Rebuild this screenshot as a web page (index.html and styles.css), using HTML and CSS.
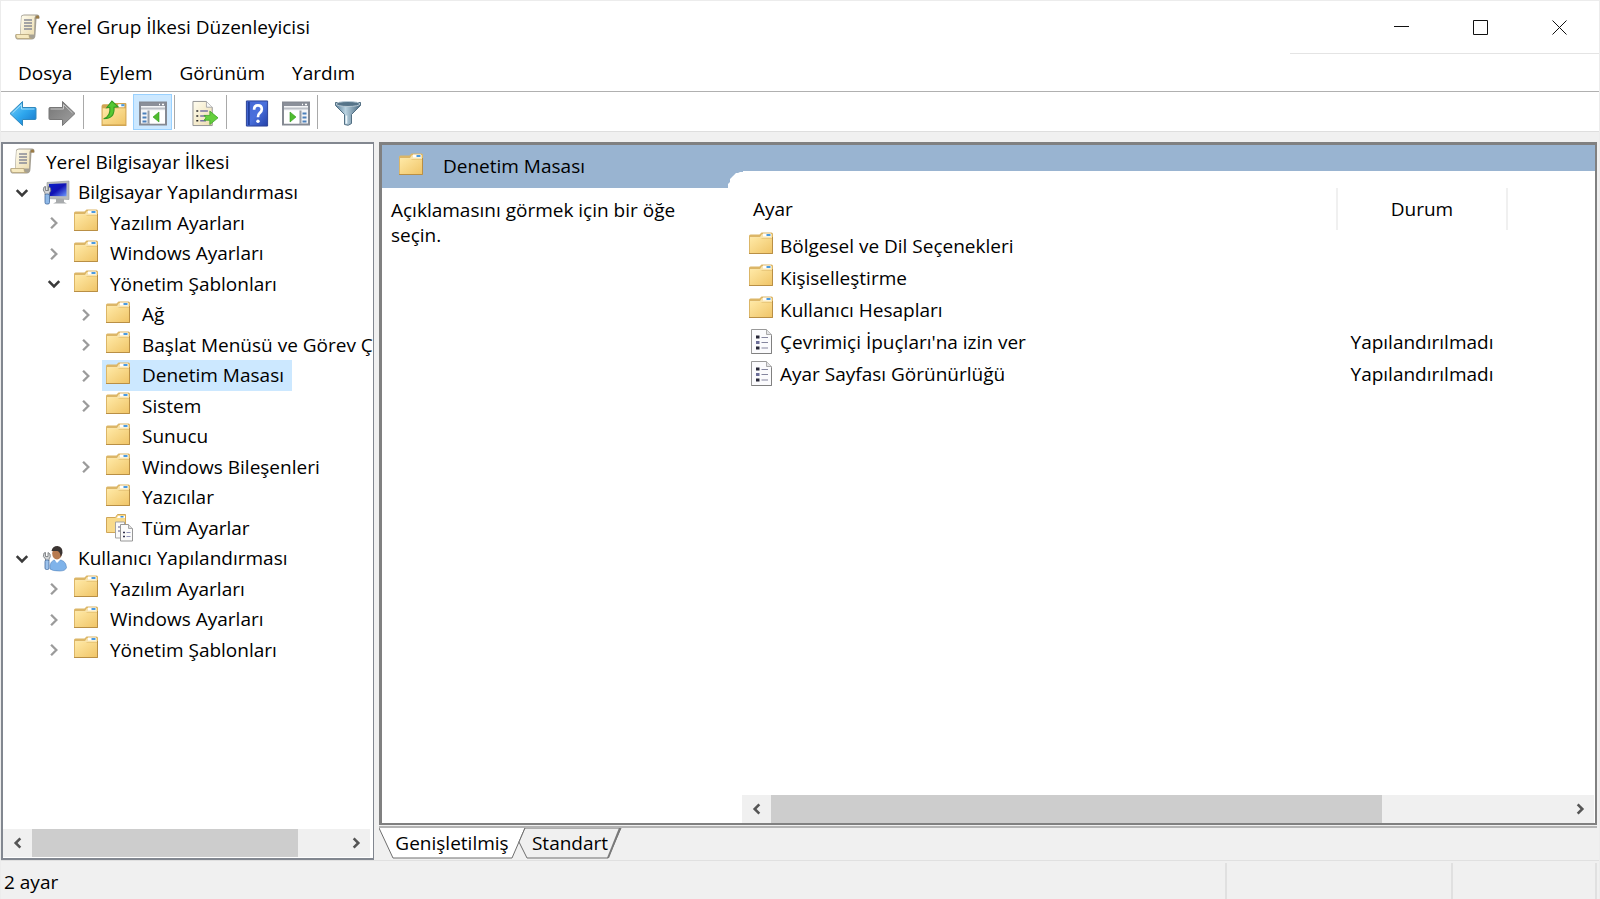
FILE: index.html
```html
<!DOCTYPE html>
<html lang="tr">
<head>
<meta charset="utf-8">
<title>Yerel Grup İlkesi Düzenleyicisi</title>
<link rel="stylesheet" href="styles.css">
</head>
<body>
<svg class="sprite" aria-hidden="true">
  <defs>
    <linearGradient id="g-folder" x1="0" y1="0" x2="1" y2="1"><stop offset="0" stop-color="#ffe9a6"/><stop offset="1" stop-color="#f0c568"/></linearGradient>
    <linearGradient id="g-blue" x1="0" y1="0" x2="1" y2="1"><stop offset="0" stop-color="#7fd0f8"/><stop offset=".5" stop-color="#2fa8ee"/><stop offset="1" stop-color="#1573c8"/></linearGradient>
    <linearGradient id="g-gray" x1="0" y1="0" x2="1" y2="1"><stop offset="0" stop-color="#757575"/><stop offset="1" stop-color="#a0a0a0"/></linearGradient>
    <linearGradient id="g-help" x1="0" y1="0" x2="1" y2="1"><stop offset="0" stop-color="#4668d4"/><stop offset=".5" stop-color="#4a70dc"/><stop offset="1" stop-color="#2340a8"/></linearGradient>
    <linearGradient id="g-screen" x1="0" y1="0" x2="1" y2="1"><stop offset="0" stop-color="#0a1fc8"/><stop offset=".5" stop-color="#1212b4"/><stop offset="1" stop-color="#6f9bff"/></linearGradient>
    <linearGradient id="g-paper" x1="0" y1="0" x2="1" y2="1"><stop offset="0" stop-color="#fffdf0"/><stop offset="1" stop-color="#ecdcae"/></linearGradient>
    <linearGradient id="g-funnel" x1="0" y1="0" x2="1" y2="0"><stop offset="0" stop-color="#5a7f99"/><stop offset=".4" stop-color="#b9d2e0"/><stop offset="1" stop-color="#48687f"/></linearGradient>
  </defs>
  <symbol id="folder" viewBox="0 0 28 24">
    <path d="M0 4q0-1.500 1.500-1.500h9l2-2H22.500q1.500 0 1.500 1.500v20H0z" fill="#dcb667"/>
    <path d="M1 5h10l2-3h10v4H1z" fill="#f8e4ae"/>
    <rect x="14" y="1.500" width="8" height="3" fill="#fff"/><rect x="17.500" y="2" width="4" height="2" fill="#4a9ae0"/>
    <path d="M1 5.500h10l2 1h10V21H1z" fill="url(#g-folder)"/>
    <path d="M0 21.500h23.500V5" fill="none" stroke="#b98f45"/>
  </symbol>
  <symbol id="scroll" viewBox="0 0 28 28">
    <path d="M6 2q1-1.500 3-1.500h13q3 0 2.500 4h-3l-1 16q0 5-4 5H2q-2.500-1-1.500-5H5z" fill="#a5a093"/>
    <path d="M6.500 3q0-1.500 2-1.500h12q-1.500 2-1 5l-.5 14H5.500z" fill="url(#g-paper)"/>
    <path d="M20.500 4q0-2.500 2-2.500t1.500 3h-3.500z" fill="#9b7b45"/>
    <path d="M1 20.500h13q-.5 4 2.500 4H3q-2.500 0-2-4z" fill="#f6e9bf" stroke="#b7a67b" stroke-width=".8"/>
    <path d="M9 6h8M9 9h8M9 12h8M9 15h8" stroke="#888a96" stroke-width="1.400"/>
  </symbol>
  <symbol id="computer" viewBox="0 0 28 28">
    <path d="M5 3.500 27 2v18.500l-22-1z" fill="#b9bcbd" stroke="#96999b" stroke-width=".6"/>
    <path d="M7 5l17.500-.7v13L7 17z" fill="url(#g-screen)"/>
    <path d="M14 20h8v3l3 1.500H11l3-1.500z" fill="#a8abad"/>
    <path d="M2 8l1.500-.5v4h3v-4L8.500 9q1 3-1 5v2H3v-2q-3-3-1-6z" fill="#d4d6d8" stroke="#6d7175" stroke-width=".8"/>
    <rect x="3" y="15" width="4.500" height="10" rx="1.500" fill="#8fb9e8" stroke="#41689c" stroke-width=".8"/>
  </symbol>
  <symbol id="user" viewBox="0 0 28 28">
    <path d="M8 24q-1-9 7-9.500 9 0 9.500 8-1 3.500-7 3.500-7 0-9.500-2z" fill="#7fb3ea" stroke="#5485bd" stroke-width=".6"/>
    <path d="M12 14l3 4 4-4z" fill="#fff"/>
    <ellipse cx="15" cy="8.500" rx="4.800" ry="6" fill="#b87b50"/>
    <path d="M9.500 6q1-5 6-5 5.500 1 5 7-1 3-2 4 0-5-3-6z" fill="#3b3432"/>
    <path d="M2 8l1.500-.5v4h2.500v-4L8 9q1 3-1 5v2H3.500v-2Q0 12 2 8z" fill="#d4d6d8" stroke="#6d7175" stroke-width=".8"/>
    <rect x="3" y="15" width="4" height="9.500" rx="1.500" fill="#9cc2ec" stroke="#41689c" stroke-width=".8"/>
  </symbol>
  <symbol id="all-settings" viewBox="0 0 28 28">
    <path d="M.5 3.500h9l2-3h8v18H.5z" fill="#f8da8b" stroke="#d0a658"/>
    <path d="M12 2h7v2h-8z" fill="#fff"/><path d="M14.500 2h3v1.500h-3z" fill="#3e91dc"/>
    <path d="M9.500 8h9v16h-9z" fill="#fafafa" stroke="#a3a3a3"/>
    <path d="M12 13h2m-2 4h2" stroke="#59598b"/>
    <path d="M14.500 10.500h8l4 4V27h-12z" fill="#fbfbfb" stroke="#979797"/><path d="M22.500 10.500v4h4" fill="#ddd" stroke="#a8a8a8"/>
    <path d="M17 18.500h2m-2 4h2" stroke="#32324e" stroke-width="1.500"/><path d="M20.500 18.500h4m-4 4h4" stroke="#9296bb"/>
  </symbol>
  <symbol id="setting" viewBox="0 0 28 28">
    <path d="M2.500 1.500h15l5 5v19h-20z" fill="#fbfbfd" stroke="#999"/><path d="M17.500 1.500v5h5" fill="#e3e3e6" stroke="#aaa"/>
    <path d="M22.500 8v17.500h-20" fill="none" stroke="#808080"/>
    <path d="M7 9h3.500m-3.500 11h3.500" stroke="#252536" stroke-width="3"/><path d="M7 14.500h3.500" stroke="#6c6e99" stroke-width="3"/>
    <path d="M12.500 9.500H19m-6.500 5H19m-6.500 5.500H19" stroke="#85869f" stroke-width="1.200"/>
  </symbol>
  <symbol id="back" viewBox="0 0 28 26"><path d="M1 13 13.500 1v6H26q1 0 1 1v10q0 1-1 1H13.500v6z" fill="url(#g-blue)" stroke="#3088bd"/><path d="M3.500 12.500 12.500 4v4.500h13" fill="none" stroke="#a4e0fb"/></symbol>
  <symbol id="forward" viewBox="0 0 28 26"><path d="M27 13 14.500 1v6H2Q1 7 1 8v10q0 1 1 1h12.500v6z" fill="url(#g-gray)" stroke="#777"/><path d="M2.500 8.500h13V4l9 8.500" fill="none" stroke="#c9c9c9"/></symbol>
  <symbol id="up" viewBox="0 0 26 26">
    <path d="M1 6q0-2 2-2h8l2-1h11q1 0 1 1v21H1z" fill="#d1a552"/><rect x="17" y="4" width="6" height="3" fill="#fff"/><rect x="20" y="4" width="3" height="2" fill="#4a9ae0"/>
    <path d="M2 8h22v15.500H2z" fill="url(#g-folder)"/>
    <path d="M3 18q7-2 6-11L6 7.500 11 1l6 5.500-4 .5q1 11-10 11z" fill="#55c832" stroke="#349821"/>
  </symbol>
  <symbol id="tree-view" viewBox="0 0 28 24">
    <path d="M1 1h26v22H1z" fill="#f4f5f7" stroke="#858a93" stroke-width="2"/><path d="M2 3h24" stroke="#8b909a" stroke-width="3"/><path d="M2 7h24" stroke="#bcc0c7" stroke-width="2"/><path d="M20 3h1m2 0h2" stroke="#fff" stroke-width="1.500"/>
    <path d="M9.500 9v13" stroke="#999ea6" stroke-width="2"/><path d="M3.500 12h4m-4 4h4m-4 4h4" stroke="#4b80bc" stroke-width="1.800"/><path d="M11 9h15v13H11z" fill="#fff"/><path d="M20 10.500v10L14 15.500z" fill="#4fbd2f" stroke="#319a1c" stroke-width=".6"/>
  </symbol>
  <symbol id="action-view" viewBox="0 0 28 24">
    <path d="M1 1h26v22H1z" fill="#f4f5f7" stroke="#858a93" stroke-width="2"/><path d="M2 3h24" stroke="#8b909a" stroke-width="3"/><path d="M2 7h24" stroke="#bcc0c7" stroke-width="2"/><path d="M20 3h1m2 0h2" stroke="#fff" stroke-width="1.500"/>
    <path d="M18.500 9v13" stroke="#999ea6" stroke-width="2"/><path d="M20.500 12h4m-4 4h4m-4 4h4" stroke="#4b80bc" stroke-width="1.800"/><path d="M2 9h15v13H2z" fill="#fff"/><path d="M8 10.500v10l6-5z" fill="#4fbd2f" stroke="#319a1c" stroke-width=".6"/>
  </symbol>
  <symbol id="export" viewBox="0 0 28 28">
    <path d="M1.500 1.500h14l6 6v19h-20z" fill="url(#g-paper)" stroke="#929292"/><path d="M15.500 1.500v6h6" fill="#f8f8f8" stroke="#aaa"/>
    <path d="M5 11.500h2m-2 5h2m-2 5h2" stroke="#222" stroke-width="1.600"/><path d="M9 11.500h8m-8 5h6m-6 5h6" stroke="#7774a4" stroke-width="1.500"/>
    <path d="M13 16h6v-4.500l8.500 7-8.500 7V21h-6l2-2.500z" fill="#65cf3d" stroke="#3ca225" stroke-width=".8"/>
  </symbol>
  <symbol id="help" viewBox="0 0 24 28">
    <path d="M1 1h22v26H1z" fill="url(#g-help)" stroke="#2b4196"/><path d="M3.500 2v24" stroke="#213f9f" stroke-width="2"/>
    <path d="M9 10q0-4.500 4-4.500t4 4q0 2.500-2.500 4.300-1.500 1.200-1.500 4.200" fill="none" stroke="#fff" stroke-width="2.800"/><circle cx="13" cy="22" r="1.800" fill="#fff"/>
  </symbol>
  <symbol id="filter" viewBox="0 0 28 26">
    <path d="M1.500 2h25v3L17.500 14v9q-3 3-7 1V14L1.500 5z" fill="url(#g-funnel)" stroke="#526f83"/><ellipse cx="14" cy="3.500" rx="12" ry="2.500" fill="#567489" stroke="#b9cad5"/><path d="M12.500 15v8" stroke="#eef7fb" stroke-width="1.500"/>
  </symbol>
  <symbol id="closed" viewBox="0 0 12 12"><path d="M3.500 1.500 8 6l-4.500 4.500" fill="none" stroke="#9b9b9b" stroke-width="2"/></symbol>
  <symbol id="open" viewBox="0 0 12 12"><path d="M1.500 3.500 6 8l4.500-4.500" fill="none" stroke="#3a3a3a" stroke-width="2.200"/></symbol>
  <symbol id="left" viewBox="0 0 12 12"><path d="M8 2 4 6l4 4" fill="none" stroke="#555" stroke-width="2.200"/></symbol>
  <symbol id="right" viewBox="0 0 12 12"><path d="M4 2l4 4-4 4" fill="none" stroke="#555" stroke-width="2.200"/></symbol>
</svg>

<div class="window">
  <header class="titlebar">
    <svg class="icon"><use href="#scroll"/></svg>
    <h1 class="title">Yerel Grup İlkesi Düzenleyicisi</h1>
    <div class="caption">
      <button class="caption-button" aria-label="Simge durumuna küçült"><svg class="glyph" viewBox="0 0 15 15"><path d="M0 6.500h15" stroke="#111"/></svg></button>
      <button class="caption-button" aria-label="Ekranı kapla"><svg class="glyph" viewBox="0 0 15 15"><path d="M.5.5h14v14H.5z" fill="none" stroke="#111"/></svg></button>
      <button class="caption-button" aria-label="Kapat"><svg class="glyph" viewBox="0 0 15 15"><path d="M.5.5l14 14m0-14-14 14" stroke="#111"/></svg></button>
    </div>
  </header>
  <nav class="menubar">
    <button class="menu">Dosya</button><button class="menu">Eylem</button><button class="menu">Görünüm</button><button class="menu">Yardım</button>
  </nav>
  <div class="toolbar" role="toolbar">
    <button class="tool" aria-label="Geri"><svg class="tool-icon"><use href="#back"/></svg></button>
    <button class="tool" aria-label="İleri"><svg class="tool-icon"><use href="#forward"/></svg></button>
    <span class="divider"></span>
    <button class="tool" aria-label="Yukarı"><svg class="tool-icon"><use href="#up"/></svg></button>
    <button class="tool pressed" aria-label="Konsol ağacını göster" aria-pressed="true"><svg class="tool-icon"><use href="#tree-view"/></svg></button>
    <span class="divider"></span>
    <button class="tool" aria-label="Listeyi dışarı aktar"><svg class="tool-icon"><use href="#export"/></svg></button>
    <span class="divider"></span>
    <button class="tool" aria-label="Yardım"><svg class="tool-icon"><use href="#help"/></svg></button>
    <button class="tool" aria-label="Eylem bölmesini göster"><svg class="tool-icon"><use href="#action-view"/></svg></button>
    <span class="divider"></span>
    <button class="tool" aria-label="Filtre"><svg class="tool-icon"><use href="#filter"/></svg></button>
  </div>

  <main class="workspace">
    <aside class="tree-pane">
      <ul class="tree">
        <li class="node root"><button class="label"><svg class="icon"><use href="#scroll"/></svg>Yerel Bilgisayar İlkesi</button></li>
        <li class="node"><button class="toggle" aria-label="Daralt"><svg class="arrow"><use href="#open"/></svg></button><button class="label"><svg class="icon"><use href="#computer"/></svg>Bilgisayar Yapılandırması</button></li>
        <li class="node level-2"><button class="toggle" aria-label="Genişlet"><svg class="arrow"><use href="#closed"/></svg></button><button class="label"><svg class="icon folder"><use href="#folder"/></svg>Yazılım Ayarları</button></li>
        <li class="node level-2"><button class="toggle" aria-label="Genişlet"><svg class="arrow"><use href="#closed"/></svg></button><button class="label"><svg class="icon folder"><use href="#folder"/></svg>Windows Ayarları</button></li>
        <li class="node level-2"><button class="toggle" aria-label="Daralt"><svg class="arrow"><use href="#open"/></svg></button><button class="label"><svg class="icon folder"><use href="#folder"/></svg>Yönetim Şablonları</button></li>
        <li class="node level-3"><button class="toggle" aria-label="Genişlet"><svg class="arrow"><use href="#closed"/></svg></button><button class="label"><svg class="icon folder"><use href="#folder"/></svg>Ağ</button></li>
        <li class="node level-3"><button class="toggle" aria-label="Genişlet"><svg class="arrow"><use href="#closed"/></svg></button><button class="label"><svg class="icon folder"><use href="#folder"/></svg>Başlat Menüsü ve Görev Ç</button></li>
        <li class="node level-3"><button class="toggle" aria-label="Genişlet"><svg class="arrow"><use href="#closed"/></svg></button><button class="label selected"><svg class="icon folder"><use href="#folder"/></svg>Denetim Masası</button></li>
        <li class="node level-3"><button class="toggle" aria-label="Genişlet"><svg class="arrow"><use href="#closed"/></svg></button><button class="label"><svg class="icon folder"><use href="#folder"/></svg>Sistem</button></li>
        <li class="node level-3"><span class="toggle"></span><button class="label"><svg class="icon folder"><use href="#folder"/></svg>Sunucu</button></li>
        <li class="node level-3"><button class="toggle" aria-label="Genişlet"><svg class="arrow"><use href="#closed"/></svg></button><button class="label"><svg class="icon folder"><use href="#folder"/></svg>Windows Bileşenleri</button></li>
        <li class="node level-3"><span class="toggle"></span><button class="label"><svg class="icon folder"><use href="#folder"/></svg>Yazıcılar</button></li>
        <li class="node level-3"><span class="toggle"></span><button class="label"><svg class="icon"><use href="#all-settings"/></svg>Tüm Ayarlar</button></li>
        <li class="node"><button class="toggle" aria-label="Daralt"><svg class="arrow"><use href="#open"/></svg></button><button class="label"><svg class="icon"><use href="#user"/></svg>Kullanıcı Yapılandırması</button></li>
        <li class="node level-2"><button class="toggle" aria-label="Genişlet"><svg class="arrow"><use href="#closed"/></svg></button><button class="label"><svg class="icon folder"><use href="#folder"/></svg>Yazılım Ayarları</button></li>
        <li class="node level-2"><button class="toggle" aria-label="Genişlet"><svg class="arrow"><use href="#closed"/></svg></button><button class="label"><svg class="icon folder"><use href="#folder"/></svg>Windows Ayarları</button></li>
        <li class="node level-2"><button class="toggle" aria-label="Genişlet"><svg class="arrow"><use href="#closed"/></svg></button><button class="label"><svg class="icon folder"><use href="#folder"/></svg>Yönetim Şablonları</button></li>
      </ul>
      <div class="scrollbar">
        <button class="scroll-button" aria-label="Sola kaydır"><svg class="arrow"><use href="#left"/></svg></button>
        <div class="track"><div class="thumb" style="width:86%"></div></div>
        <button class="scroll-button" aria-label="Sağa kaydır"><svg class="arrow"><use href="#right"/></svg></button>
      </div>
    </aside>

    <section class="content">
      <div class="result-pane">
        <div class="description">
          <h2 class="heading"><svg class="icon folder"><use href="#folder"/></svg>Denetim Masası</h2>
          <p class="hint">Açıklamasını görmek için bir öğe seçin.</p>
        </div>
        <div class="list">
          <div class="band"></div>
          <svg class="curve" viewBox="0 0 16 17"><path d="M0 0h16v1h-3l-2 1H9L6 5 3 8v3l-2 2v4H0z" fill="#99b4d1"/></svg>
          <table class="settings">
            <colgroup><col><col class="col-state"><col class="col-rest"></colgroup>
            <thead><tr><th>Ayar</th><th class="state">Durum</th><th></th></tr></thead>
            <tbody>
              <tr><td><span class="item"><svg class="icon folder"><use href="#folder"/></svg>Bölgesel ve Dil Seçenekleri</span></td><td></td><td></td></tr>
              <tr><td><span class="item"><svg class="icon folder"><use href="#folder"/></svg>Kişiselleştirme</span></td><td></td><td></td></tr>
              <tr><td><span class="item"><svg class="icon folder"><use href="#folder"/></svg>Kullanıcı Hesapları</span></td><td></td><td></td></tr>
              <tr><td><span class="item"><svg class="icon"><use href="#setting"/></svg>Çevrimiçi İpuçları'na izin ver</span></td><td class="state">Yapılandırılmadı</td><td></td></tr>
              <tr><td><span class="item"><svg class="icon"><use href="#setting"/></svg>Ayar Sayfası Görünürlüğü</span></td><td class="state">Yapılandırılmadı</td><td></td></tr>
            </tbody>
          </table>
          <div class="scrollbar list-scroll">
            <button class="scroll-button" aria-label="Sola kaydır"><svg class="arrow"><use href="#left"/></svg></button>
            <div class="track"><div class="thumb" style="width:77%"></div></div>
            <button class="scroll-button" aria-label="Sağa kaydır"><svg class="arrow"><use href="#right"/></svg></button>
          </div>
        </div>
      </div>
      <div class="tabs" role="tablist">
        <button class="tab active" role="tab" aria-selected="true"><svg class="tab-shape" viewBox="0 0 146 31" preserveAspectRatio="none"><path d="M0 0 14 30h119L146 0" fill="#fff" stroke="#6e6e6e"/></svg><span class="tab-text">Genişletilmiş</span></button>
        <button class="tab" role="tab" aria-selected="false"><svg class="tab-shape" viewBox="0 0 104 31" preserveAspectRatio="none"><path d="M7 0 1 14l8 16h81l13-30z" fill="#f0f0f0" stroke="#6e6e6e"/><path d="M90 30 102 0" stroke="#7a7a7a" stroke-width="2"/></svg><span class="tab-text">Standart</span></button>
      </div>
    </section>
  </main>
  <footer class="statusbar"><span class="status">2 ayar</span><span class="status-cell first"></span><span class="status-cell"></span></footer>
</div>
</body>
</html>
```

FILE: styles.css
```css
* { box-sizing: border-box; }
body { margin: 0; font: 19px/25px "Open Sans", "Noto Sans", sans-serif; color: #000; background: #f0f0f0; }
button { margin: 0; padding: 0; border: 0; background: none; font: inherit; color: inherit; }
svg { display: block; flex: none; }
.sprite { position: absolute; width: 0; height: 0; }
.window { display: flex; flex-direction: column; height: 100vh; border: 1px solid #ececec; border-bottom: 0; }

.titlebar { display: flex; align-items: center; height: 53px; padding-left: 14px; background: #fff; }
.icon { width: 28px; height: 28px; }
.icon.folder { height: 24px; margin-bottom: 4px; }
.title { flex: 1; margin: 0 0 0 4px; font-size: 19px; font-weight: 400; }
.caption { display: flex; align-self: stretch; border-bottom: 1px solid #e4e4e4; }
.caption-button { display: flex; align-items: center; justify-content: center; width: 79px; }
.caption-button:first-child { width: 151px; padding-left: 72px; }
.glyph { width: 15px; height: 15px; }

.menubar { display: flex; gap: 27px; height: 38px; padding: 2px 17px 1px; background: #fff; border-bottom: 1px solid #b0b0b0; }

.toolbar { display: flex; height: 40px; padding: 2px 2px 1px; background: #fff; border-bottom: 1px solid #dedede; }
.tool { display: flex; align-items: center; justify-content: center; width: 39px; padding-top: 2px; }
.tool.pressed { background: #cce8ff; border: 1px solid #99d1ff; }
.tool-icon { width: 28px; height: 27px; }
.divider { width: 1px; margin: 1px 10px 1px 2px; background: #a9a9a9; }

.workspace { display: flex; flex: 1; min-height: 0; gap: 5px; padding: 10px 2px 0 0; }
.tree-pane { display: flex; flex-direction: column; width: 373px; border: 2px solid #828790; border-right-width: 1px; background: #fff; overflow: hidden; }
.tree { flex: 1; margin: 0; padding: 3px 0 0; list-style: none; overflow: hidden; }
.node { display: flex; height: 30px; padding-left: 8px; }
.node:nth-child(even) { height: 31px; }
.root { padding-left: 3px; }
.level-2 { padding-left: 40px; }
.level-3 { padding-left: 72px; }
.toggle { display: flex; align-items: center; justify-content: center; flex: none; width: 22px; margin-right: 5px; }
.arrow { width: 14px; height: 14px; }
.label { display: flex; align-items: center; gap: 8px; padding: 0 8px 0 4px; white-space: nowrap; }
.selected { background: #cce8ff; }

.scrollbar { display: flex; height: 28px; margin: 0 3px 1px 0; background: #f0f0f0; }
.scroll-button { display: flex; align-items: center; justify-content: center; width: 29px; }
.track { flex: 1; }
.thumb { height: 100%; background: #cdcdcd; }

.content { display: flex; flex-direction: column; flex: 1; min-width: 0; }
.result-pane { display: flex; flex: 1; min-height: 0; border: 3px solid #808080; border-right-width: 2px; border-bottom-width: 2px; background: #fff; }
.description { width: 345px; }
.heading { display: flex; align-items: center; gap: 16px; height: 43px; margin: 0; padding-left: 17px; font-size: 19px; font-weight: 400; background: #99b4d1; }
.hint { margin: 0; padding: 10px 16px 0 9px; }
.list { display: flex; flex-direction: column; flex: 1; min-width: 0; }
.band { height: 26px; background: #99b4d1; }
.curve { width: 16px; height: 17px; }
.settings { margin-left: 16px; border-collapse: collapse; table-layout: fixed; }
.col-state { width: 170px; }
.col-rest { width: 88px; }
.settings th { height: 42px; padding: 0 10px; text-align: left; font-weight: 400; border-right: 2px solid #f0f0f0; }
.settings th:last-child { border: 0; }
.settings td { height: 32px; padding: 0; }
.settings .state { padding: 0; text-align: center; }
.item { display: flex; align-items: center; gap: 3px; padding-left: 6px; }
.list-scroll { margin: auto 1px 0 15px; }

.tabs { display: flex; height: 34px; margin-top: 1px; border-top: 2px solid #b4b4b4; }
.tab { position: relative; width: 146px; height: 31px; }
.tab + .tab { width: 104px; margin-left: -7px; }
.tab-shape { position: absolute; inset: 0; width: 100%; height: 100%; }
.tab-text { position: relative; }

.statusbar { display: flex; height: 39px; padding: 2px 2px 0 3px; border-top: 1px solid #e0e0e0; }
.status { flex: 1; padding-top: 7px; }
.status-cell { width: 146px; border-left: 2px solid #e0e0e0; border-right: 2px solid #e0e0e0; }
.status-cell.first { width: 226px; border-right: 0; }
```
